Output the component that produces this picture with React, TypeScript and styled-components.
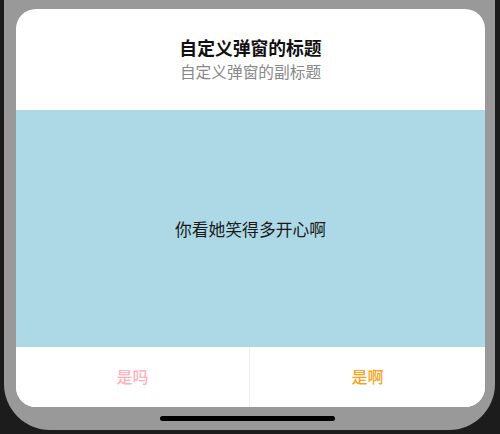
import React from "react";
import styled, { createGlobalStyle } from "styled-components";

const Global = createGlobalStyle`
  html, body {
    margin: 0;
    padding: 0;
    background: #1c1c1c;
    font-family: "Noto Sans CJK SC", "Noto Sans", sans-serif;
  }
  #root { height: 434px; overflow: hidden; }
`;

const Frame = styled.div`
  margin-left: 4px;
  width: 491px;
  height: 430px;
  box-sizing: border-box;
  background: #999999;
  border-radius: 0 0 46px 46px;
  padding: 9px 10px 0 12px;
  display: flex;
  flex-direction: column;
`;

const Card = styled.div`
  height: 398px;
  border-radius: 20px;
  overflow: hidden;
  background: #ffffff;
  display: flex;
  flex-direction: column;
`;

const Header = styled.div`
  height: 101px;
  box-sizing: border-box;
  padding-top: 26px;
  display: flex;
  flex-direction: column;
  align-items: center;
`;

const Title = styled.div`
  font-size: 17.8px;
  line-height: 25px;
  font-weight: 600;
  color: #111111;
`;

const Subtitle = styled.div`
  font-size: 15.7px;
  line-height: 24px;
  color: #888888;
`;

const Body = styled.div`
  height: 237px;
  background: #add8e6;
  display: flex;
  align-items: center;
  justify-content: center;
  font-size: 16.8px;
  color: #1a1a1a;
`;

const Footer = styled.div`
  flex: 1;
  display: grid;
  grid-template-columns: 234px 1fr;
`;

const Action = styled.button<{ $color: string; $divider?: boolean }>`
  border: none;
  background: #ffffff;
  font-family: inherit;
  font-size: 16px;
  font-weight: 500;
  color: ${(p) => p.$color};
  border-right: ${(p) => (p.$divider ? "1px solid #eeeeee" : "none")};
  padding: 0 0 2px;
  cursor: pointer;
`;

const HomeBar = styled.div`
  margin: 9px auto 0;
  width: 175px;
  height: 5px;
  border-radius: 3px;
  background: #000000;
  position: relative;
  left: -3px;
`;

export default function App() {
  return (
    <>
      <Global />
      <Frame>
        <Card>
          <Header>
            <Title>自定义弹窗的标题</Title>
            <Subtitle>自定义弹窗的副标题</Subtitle>
          </Header>
          <Body>你看她笑得多开心啊</Body>
          <Footer>
            <Action $color="#ffb0bd" $divider>是吗</Action>
            <Action $color="#f5a21e">是啊</Action>
          </Footer>
        </Card>
        <HomeBar />
      </Frame>
    </>
  );
}
